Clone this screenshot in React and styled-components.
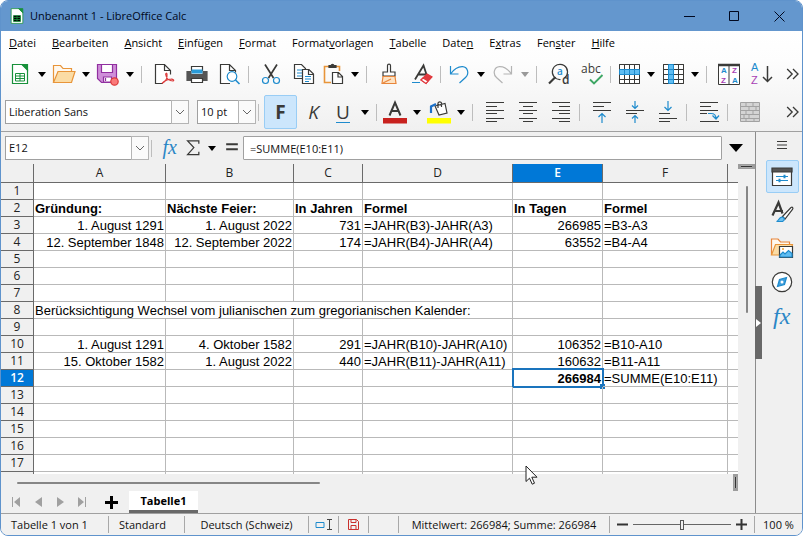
import React, { useState } from 'react';
import styled, { createGlobalStyle, css } from 'styled-components';

const dark = '#3a3a38';
const blue = '#1e8bcd';
const line = '#a0a0a0';

// Styles
const GlobalStyle = createGlobalStyle`
	* {
		box-sizing: border-box;
	}

	body {
		margin: 0;
		background: #fff;
		color: #111;
		font-family: 'Open Sans', 'Noto Sans', sans-serif;
		font-size: 11px;
		line-height: 16px;
	}

	button,
	input,
	select {
		margin: 0;
		padding: 0;
		border: 0;
		background: none;
		color: inherit;
		font: inherit;
	}

	svg {
		display: block;
		flex: none;
		overflow: visible;
	}
`;

const Window = styled.div`
	position: relative;
	display: flex;
	flex-direction: column;
	height: 100vh;
	min-height: 400px;
	overflow: hidden;
	border: 1px solid #5f93cc;
	border-radius: 8px;
	background: #f0f0f0;
`;

const TitleBar = styled.header`
	display: flex;
	align-items: center;
	flex: none;
	height: 30px;
	padding-left: 9px;
	background: #6497ce;
`;

const Title = styled.h1`
	flex: 1;
	margin: 0 0 0 6px;
	font-size: 11px;
	font-weight: normal;
	color: #000820;
`;

const WindowButton = styled.button`
	display: flex;
	align-items: center;
	justify-content: center;
	width: 45px;
	height: 30px;
`;

const Tools = styled.div`
	flex: none;
	border-bottom: 1px solid ${line};
	background: linear-gradient(#fff, #fdfdfd 30%, #f0f0f0);
`;

const MenuBar = styled.nav`
	display: flex;
	gap: 16px;
	height: 24px;
	padding: 4px 8px 0;

	a {
		color: #000;
		text-decoration: none;
	}
`;

const Toolbar = styled.div`
	display: flex;
	align-items: center;
	height: 38px;
	padding: 0 0 0 ${props => props.$indent}px;
`;

const Separator = styled.span`
	flex: none;
	width: 1px;
	height: 17px;
	margin: 0 5px 0 2px;
	background: #bdbdbd;
`;

const ToolButton = styled.button`
	display: flex;
	align-items: center;
	justify-content: center;
	flex: none;
	width: ${props => props.$width || 33}px;
	height: 34px;
	border-radius: 2px;

	${props =>
		props.$active &&
		css`
			border: 1px solid #99cdf5;
			background: #cce6fc;
		`}
`;

const OverflowButton = styled(ToolButton)`
	margin-left: auto;
`;

const Letter = styled.span`
	color: ${dark};
	font-size: 19px;
	line-height: 20px;
	font-weight: ${props => (props.$bold ? 700 : 400)};
	font-style: ${props => (props.$italic ? 'italic' : 'normal')};
	border-bottom: ${props => (props.$line ? `1px solid ${blue}` : '0')};
`;

const Combo = styled.div`
	position: relative;
	flex: none;
	width: ${props => props.$width}px;
	height: 24px;
	margin-right: ${props => props.$after}px;

	select {
		width: 100%;
		height: 100%;
		padding: 0 20px 0 3px;
		appearance: none;
		border: 1px solid ${line};
		background: #fff;
	}

	svg {
		position: absolute;
		top: 0;
		right: 0;
		pointer-events: none;
	}
`;

const Workspace = styled.div`
	display: flex;
	flex: 1;
	min-height: 0;
`;

const Main = styled.main`
	display: flex;
	flex: 1;
	flex-direction: column;
	min-width: 0;
`;

const FormulaBar = styled.div`
	display: flex;
	align-items: center;
	flex: none;
	height: 32px;
	padding: 0 5px 0 4px;
`;

const FormulaInput = styled.input`
	flex: 1;
	min-width: 0;
	height: 24px;
	padding: 0 6px;
	border: 1px solid ${line};
	border-radius: 1px;
	background: #fff;
`;

const GridArea = styled.div`
	display: flex;
	flex: 1;
	min-height: 0;
`;

const Sheet = styled.div`
	flex: 1;
	min-width: 0;
	overflow: hidden;
	background: #fff;
`;

const Table = styled.table`
	width: 100%;
	table-layout: fixed;
	border-collapse: separate;
	border-spacing: 0;
`;

const ColHead = styled.th`
	height: 19px;
	padding: 0;
	border-right: 1px solid #6a6a6a;
	border-bottom: 1px solid #6a6a6a;
	background: ${props => (props.$active ? '#0078d7' : '#f0f0f0')};
	color: ${props => (props.$active ? '#fff' : '#222')};
	font-size: 12px;
	font-weight: ${props => (props.$active ? 600 : 400)};
	line-height: 18px;

	&:last-child {
		border-right: 0;
	}
`;

const RowHead = styled(ColHead)`
	height: 17px;
	line-height: 16px;
`;

const Cell = styled.td`
	position: relative;
	height: 17px;
	padding: 2px 1px 0;
	border-right: 1px solid #b9b9b9;
	border-bottom: 1px solid #b9b9b9;
	color: #000;
	font-family: 'Liberation Sans', Arial, sans-serif;
	font-size: 13px;
	font-weight: ${props => (props.$bold ? 700 : 400)};
	line-height: 14px;
	text-align: ${props => (props.$right ? 'right' : 'left')};
	white-space: nowrap;

	&:last-child {
		border-right: 0;
	}
`;

const Selection = styled.span`
	position: absolute;
	inset: -2px -2px -2px -1px;
	border: 2px solid #1a74bd;

	&::after {
		content: '';
		position: absolute;
		right: -3px;
		bottom: -3px;
		width: 5px;
		height: 5px;
		background: #1a74bd;
	}
`;

const VerticalScroll = styled.div`
	display: flex;
	flex: none;
	flex-direction: column;
	align-items: center;
	width: 17px;
`;

const VerticalSplit = styled.span`
	width: 100%;
	height: 5px;
	margin-bottom: 17px;
	border: 1px solid #9c9c9c;
	border-width: 1px 3px;
	background: linear-gradient(#aaa 1px, #333 1px, #333 2px, #aaa 2px);
`;

const VerticalThumb = styled.span`
	width: 2px;
	height: 41%;
	border-radius: 1px;
	background: #868686;
`;

const HorizontalScroll = styled.div`
	display: flex;
	align-items: center;
	justify-content: space-between;
	flex: none;
	height: 17px;
	padding: 0 17px 0 16px;
`;

const HorizontalThumb = styled.span`
	width: 42%;
	height: 2px;
	border-radius: 1px;
	background: #868686;
`;

const HorizontalSplit = styled.span`
	width: 5px;
	height: 17px;
	border: 1px solid #9c9c9c;
	border-width: 3px 1px;
	background: linear-gradient(90deg, #aaa 1px, #333 1px, #333 2px, #aaa 2px);
`;

const TabBar = styled.div`
	display: flex;
	align-items: center;
	flex: none;
	height: 22px;
	padding-left: 4px;
`;

const NavButton = styled.button`
	display: flex;
	justify-content: center;
	width: 22px;
`;

const AddButton = styled(NavButton)`
	width: 36px;
`;

const SheetTab = styled.button`
	width: 69px;
	height: 22px;
	border-bottom: 3px solid #696969;
	background: #fff;
	color: #000;
	font-weight: 700;
`;

const Sidebar = styled.aside`
	position: relative;
	display: flex;
	flex: none;
	flex-direction: column;
	align-items: center;
	gap: 2px;
	width: 47px;
	padding-left: 6px;
	border-left: 1px solid #8c8c8c;
`;

const SideButton = styled(ToolButton)`
	height: 33px;
`;

const SideMenuButton = styled(ToolButton)`
	height: 26px;
`;

const Handle = styled.button`
	position: absolute;
	top: 154px;
	left: -1px;
	display: flex;
	align-items: center;
	width: 7px;
	height: 73px;
	background: #686868;
`;

const StatusBar = styled.footer`
	display: flex;
	align-items: center;
	flex: none;
	height: 22px;
	border-top: 1px solid ${line};
	background: #f1f1f1;
`;

const StatusCell = styled.div`
	display: flex;
	align-items: center;
	justify-content: ${props => props.$align || 'center'};
	flex: ${props => (props.$width ? `0 0 ${props.$width}px` : 1)};
	height: 17px;
	padding-left: ${props => (props.$align ? 10 : 0)}px;
	border-right: 1px solid #a8a8a8;
	white-space: nowrap;

	&:last-child {
		border-right: 0;
	}
`;

const ZoomSlider = styled.input`
	width: 98px;
	height: 16px;
	margin: 0 5px;
	appearance: none;
	background: linear-gradient(#666, #666) center / 100% 1px no-repeat;

	&::-webkit-slider-thumb {
		width: 4px;
		height: 10px;
		appearance: none;
		border: 1px solid #555;
		background: #f0f0f0;
	}
`;

const Pointer = styled.svg`
	position: absolute;
	left: 524px;
	top: 464px;
	pointer-events: none;
`;

// Icons
const Icon = ({ size = 24, children }) => (
	<svg
		width={size}
		height={size}
		viewBox="0 0 24 24"
		fill="none"
		stroke={dark}
		strokeWidth="1.2"
		aria-hidden="true"
	>
		{children}
	</svg>
);

const Lines = ({ rows }) => <path d={rows.map(([x, y, w]) => `M${x} ${y}h${w}`).join('')} />;

const icons = {
	calc: (
		<g stroke="#18913b">
			<path d="M4.5 2.5h10l5 5v14h-15z" fill="#fff" />
			<path d="M14 2.5h5.500v5.500z" fill="#18913b" />
			<path d="M7.500 11.500h9v7.500h-9zM7.500 14h9M7.500 16.500h9M12 11.500v7.500" strokeWidth="1" />
		</g>
	),
	open: (
		<g stroke="#e8953a">
			<path d="M1.500 20.500v-17h7l2.500 3h8.500v3" fill="#fff8ee" />
			<path d="M1.500 20.500l4.500-11h17l-3.500 11z" fill="#fbdca5" />
		</g>
	),
	save: (
		<g>
			<path d="M1.500 2.500h19v18h-15l-4-4z" fill="#cf8fd9" stroke="#9130a0" />
			<path d="M5.500 2.500h11v8h-11z" fill="#fff" stroke="#9130a0" />
			<path d="M7.500 20v-5h8v5z" fill="#fff" stroke="#9130a0" />
			<path d="M9.500 16v3" stroke="#9130a0" />
			<circle cx="18.500" cy="19.500" r="3.700" fill="#fa7a7a" stroke="#dc3b3b" />
		</g>
	),
	pdf: (
		<g>
			<path d="M11 21.500H3.500v-19h9l6 6v4M12.500 2.500v6h6" fill="#fff" />
			<path
				d="M10 21.500c3.500-1.500 5.500-5.500 5-9.500-.2-1.200-1.500-1-1.300.5.500 3.500 3.300 6.500 7.300 6.500 1.500-.3.500-2-2-1.800-3.500.2-6.500 1.300-9 4.300z"
				stroke="#dc3b3b"
			/>
		</g>
	),
	print: (
		<g>
			<path d="M6.500 9V4.500h11V9" fill="#fff" />
			<path d="M2 9.500h4v3h12v-3h4v9H2z" fill="#555" stroke="#555" />
			<path d="M6.500 7.500h11v4h-11z" fill="#2a9bd8" stroke="none" />
			<path d="M6.500 16.500h11v4h-11z" fill="#fff" />
		</g>
	),
	preview: (
		<g>
			<path d="M12 21.500H2.500v-19h9l6 6v2M11.500 2.500v6h6" fill="#fff" />
			<circle cx="14" cy="14.500" r="4.800" stroke={blue} fill="#fff" />
			<path d="M17.500 18l4 4" stroke={blue} strokeWidth="1.600" />
		</g>
	),
	cut: (
		<g>
			<path d="M6 2.500l8.500 13.500M18 2.500L9.500 16" strokeWidth="1.700" />
			<circle cx="6.500" cy="18.500" r="3" stroke={blue} />
			<circle cx="17.500" cy="18.500" r="3" stroke={blue} />
		</g>
	),
	copy: (
		<g>
			<path d="M2.500 2.500h7l4 4v10h-11z" fill="#fff" />
			<path d="M5 8h5M5 11h5M5 14h5" stroke={blue} />
			<path d="M10.500 7.500h6.500l4.500 4.500v9.500h-11zM16.500 7.500v5h5" fill="#fff" />
			<path d="M13 14.500h6M13 17h6M13 19.500h4" stroke={blue} />
		</g>
	),
	paste: (
		<g>
			<path d="M8 4.500H3.500v16H10M15 4.500h3.500V9" stroke="#e8953a" strokeWidth="1.600" />
			<path d="M8 5.500V3.500h2c.5-1.500 2.500-1.500 3 0h2v2z" fill={dark} />
			<path d="M11.500 10.500h6l4 4v7h-10zM17 10.500v4.500h4.500" fill="#fff" />
		</g>
	),
	brush: (
		<g>
			<path d="M10.500 10V3.500c0-1.800 3-1.800 3 0V10h4.500v4H6v-4z" fill="#fff" />
			<path d="M6 14.500h12l1 7H5z" fill="#fde3c4" stroke="#e8853a" />
			<path d="M6 21l8-4" stroke="#e8853a" />
		</g>
	),
	clear: (
		<g>
			<path d="M5 17.500L13.500 3.500l3 9M8 12.500h8" strokeWidth="1.800" />
			<path d="M2 20.500h8" stroke={blue} />
			<path d="M11 18l6-6 5 3-6 6.500z" fill="#e0393e" stroke="#e0393e" />
			<path d="M11 18l2-2 5 3-2 2.500z" fill="#fff" stroke="#e0393e" />
		</g>
	),
	undo: <path d="M3.500 4v8h8M3.500 12c4-5.500 7.500-7.500 12-7.300 5.500.5 7 7 3 10.800l-6 5.500" stroke={blue} />,
	redo: <path d="M20.500 4v8h-8M20.500 12c-4-5.500-7.500-7.500-12-7.300-5.500.5-7 7-3 10.800l6 5.500" stroke="#b4b4b4" />,
	find: (
		<g>
			<path d="M17.500 16a7.600 7.600 0 1 0-4 1.500" />
			<path d="M8.500 15L2 21.500" strokeWidth="2.200" />
			<text x="10" y="13" fontSize="10" fontWeight="600" fill={blue} stroke="none">a</text>
			<text x="15" y="22" fontSize="12" fontWeight="600" fill={dark} stroke="none">d</text>
		</g>
	),
	spell: (
		<g>
			<text x="1" y="11" fontSize="12" fill={dark} stroke="none">abc</text>
			<path d="M10 17.500l4 4L22.500 13" stroke="#3fa765" strokeWidth="1.900" />
		</g>
	),
	rowGrid: (
		<g strokeWidth="1">
			<path d="M2.500 2.500h20v19h-20z" fill="#fff" />
			<path d="M2.500 7.500h20v5h-20z" fill="#5fbdf2" stroke="none" />
			<path d="M2.500 2.500h20v19h-20zM2.500 17.500h20M7.500 2.500v5M12.500 2.500v5M17.500 2.500v5M7.500 12.500v9M12.500 12.500v9M17.500 12.500v9" />
			<path d="M2.500 7.500h20v5h-20zM7.500 7.500v5M12.500 7.500v5M17.500 7.500v5" stroke={blue} />
		</g>
	),
	colGrid: (
		<g strokeWidth="1">
			<path d="M2.500 2.500h20v19h-20z" fill="#fff" />
			<path d="M7.500 2.500h5v19h-5z" fill="#5fbdf2" stroke="none" />
			<path d="M2.500 2.500h20v19h-20zM17.500 2.500v19M2.500 7.500h5M2.500 12.500h5M2.500 17.500h5M12.500 7.500h10M12.500 12.500h10M12.500 17.500h10" />
			<path d="M7.500 2.500h5v19h-5zM7.500 7.500h5M7.500 12.500h5M7.500 17.500h5" stroke={blue} />
		</g>
	),
	sort: (
		<g>
			<path d="M1.500 3h21v19.500h-21zM12 4v18" fill="#fff" strokeWidth="1" />
			<path d="M1 3h22" strokeWidth="2.500" />
			<g fontFamily="Liberation Sans, sans-serif" fontSize="8" fontWeight="700" stroke="none">
				<text x="4" y="11" fill={blue}>A</text>
				<text x="15" y="11" fill="#a83fb5">Z</text>
				<text x="4" y="21" fill="#a83fb5">Z</text>
				<text x="15" y="21" fill={blue}>A</text>
			</g>
		</g>
	),
	sortAz: (
		<g>
			<g fontFamily="Liberation Sans, sans-serif" fontSize="11" stroke="none">
				<text x="1" y="9" fill={blue}>A</text>
				<text x="1" y="22" fill="#a83fb5">Z</text>
			</g>
			<path d="M17.500 4v15.500M13 15l4.500 4.500L22 15" strokeWidth="1.500" />
		</g>
	),
	left: <Lines rows={[[3, 2.5, 18], [3, 6.5, 11], [3, 10.5, 18], [3, 13.5, 11], [3, 18.5, 18], [3, 21.5, 11]]} />,
	center: <Lines rows={[[3, 2.5, 18], [7, 6.5, 10], [3, 10.5, 18], [7, 13.5, 10], [3, 18.5, 18], [7, 21.5, 10]]} />,
	right: <Lines rows={[[3, 2.5, 18], [10, 6.5, 11], [3, 10.5, 18], [10, 13.5, 11], [3, 18.5, 18], [10, 21.5, 11]]} />,
	top: (
		<g>
			<Lines rows={[[3, 2.5, 18], [3, 6.5, 11], [3, 10.5, 18]]} />
			<path d="M12 23v-9M8.500 17l3.500-3.500 3.500 3.500" stroke={blue} />
		</g>
	),
	middle: (
		<g>
			<Lines rows={[[3, 10.5, 18], [3, 13.5, 11]]} />
			<path d="M12 1v7M9 5.500l3 3 3-3M12 23v-7M9 18.500l3-3 3 3" stroke={blue} />
		</g>
	),
	bottom: (
		<g>
			<Lines rows={[[3, 13.5, 11], [3, 18.5, 18], [3, 21.5, 11]]} />
			<path d="M12 1v9M8.500 7l3.500 3.500L15.500 7" stroke={blue} />
		</g>
	),
	wrap: (
		<g>
			<Lines rows={[[3, 2.5, 18], [3, 6.5, 11], [3, 10.5, 18], [3, 21.5, 19]]} />
			<path d="M3 13.500h7" />
			<path d="M11 13.500h3c3.500 0 5 2 5 5M15.500 15.500l3.500 3.500 3-3.500" stroke={blue} />
		</g>
	),
	merge: (
		<g stroke="#a2a2a2" strokeWidth="1">
			<path d="M2.500 2.500h19v19h-19z" fill="#d4d4d4" />
			<path d="M2.500 6.500h19M2.500 10.500h19M2.500 14.500h19M2.500 18.500h19M8 2.500v4M15 2.500v4M11 6.500v4M18 6.500v4M8 10.500v4M15 10.500v4M11 14.500v4M6 14.500v4M8 18.500v3M16 18.500v3" />
		</g>
	),
	fontColor: (
		<g>
			<path d="M6.500 15.500L12 2.500l5.500 13M8.500 11h7" strokeWidth="2" />
			<path d="M0 18h24v5.500H0z" fill="#c8211e" stroke="none" />
		</g>
	),
	fill: (
		<g>
			<path d="M8 6l10-2.500 2 9.500-8 2zM11 8V3c.5-1.500 3-1.500 3.500 0v4" fill="#fff" />
			<path d="M4 13V6.500L9 4" stroke="#1c70c8" strokeWidth="2.200" />
			<path d="M0 18h24v5.500H0z" fill="#ff0" stroke="none" />
		</g>
	),
	properties: (
		<g>
			<path d="M2.500 3.500h19v17h-19z" fill="#fff" />
			<path d="M2 3h20v4H2z" fill="#555" />
			<path d="M6 11.500h12M6 15.500h12" stroke={blue} />
			<path d="M14.500 9.800v3.400M9.500 13.800v3.400" stroke={blue} strokeWidth="2" />
		</g>
	),
	styles: (
		<g>
			<path d="M2.500 15.500L8.500 2.500l4 11M5 11h8" strokeWidth="2.200" />
			<path d="M12.500 16.500L21 7.500c1.500-1 2.500.5 1.500 1.800L15 19z" fill="#fff" />
			<path d="M6.500 21.500c2.500-.5 2-4 5.500-4.500 3 .3 3 3.500.5 4.500z" fill="#6cc0f0" stroke={blue} />
		</g>
	),
	gallery: (
		<g>
			<path d="M1.500 20V4h6.500l2.500 3h9v3" fill="#fff8ee" stroke="#e8853a" />
			<path d="M1.500 20L5.500 9.500h17L20 20z" fill="#fbdca5" stroke="#e8953a" />
			<path d="M9.500 11.500h13v11h-13z" fill="#fff" />
			<path d="M10 20l3-3 2 2 3.500-3.500 3.500 3V22H10z" fill="#5fbdf2" stroke={blue} />
			<circle cx="13" cy="14" r="1" fill="#f0a030" stroke="none" />
		</g>
	),
	navigator: (
		<g>
			<circle cx="12" cy="12" r="9.700" fill="#fff" />
			<path d="M16.500 7.500l-2 7-7 2 2-7z" fill="#3f9edb" stroke={blue} />
			<circle cx="12" cy="12" r="1.500" fill="#fff" stroke="none" />
		</g>
	),
	functions: (
		<text x="3" y="19" fontFamily="Liberation Serif, serif" fontStyle="italic" fontSize="24" fill="#2b86c6" stroke="none">
			fx
		</text>
	),
	more: <path d="M5 6l6 6-6 6M12 6l6 6-6 6" strokeWidth="1.600" />
};

const Caret = ({ muted }) => (
	<svg width="8" height="5" viewBox="0 0 8 5" aria-hidden="true">
		<path d="M0 0h8L4 5z" fill={muted ? '#999' : '#000'} />
	</svg>
);

const Chevron = () => (
	<svg width="18" height="24" viewBox="0 0 18 24" fill="none" aria-hidden="true">
		<path d="M.5.5h17v23H.5z" fill="#fafafa" stroke="#b4b4b4" />
		<path d="M5 10l4 4 4-4" stroke="#666" />
	</svg>
);

const Tool = ({ name, label }) => (
	<ToolButton aria-label={label}>
		<Icon>{icons[name]}</Icon>
	</ToolButton>
);

const DropTool = ({ name, label, muted, children }) => (
	<React.Fragment>
		<ToolButton $width={26} aria-label={label} disabled={muted}>
			{children || <Icon>{icons[name]}</Icon>}
		</ToolButton>
		<ToolButton $width={18} aria-label={`${label}: Optionen`} disabled={muted}>
			<Caret muted={muted} />
		</ToolButton>
	</React.Fragment>
);

const Select = ({ label, value, width, after = 0 }) => (
	<Combo $width={width} $after={after}>
		<select aria-label={label} defaultValue={value}>
			<option>{value}</option>
		</select>
		<Chevron />
	</Combo>
);

// Menu entries, with the index of the underlined letter
const menus = [
	['Datei', 0],
	['Bearbeiten', 0],
	['Ansicht', 0],
	['Einfügen', 0],
	['Format', 0],
	['Formatvorlagen', 6],
	['Tabelle', 0],
	['Daten', 4],
	['Extras', 1],
	['Fenster', 3],
	['Hilfe', 0]
];

const columns = [
	{ name: 'A', width: 132 },
	{ name: 'B', width: 128 },
	{ name: 'C', width: 69 },
	{ name: 'D', width: 150 },
	{ name: 'E', width: 90 },
	{ name: 'F', width: 125 },
	{ name: '' }
];

const cells = {
	2: ['Gründung:', 'Nächste Feier:', 'In Jahren', 'Formel', 'In Tagen', 'Formel'],
	3: ['1. August 1291', '1. August 2022', '731', '=JAHR(B3)-JAHR(A3)', '266985', '=B3-A3'],
	4: ['12. September 1848', '12. September 2022', '174', '=JAHR(B4)-JAHR(A4)', '63552', '=B4-A4'],
	8: ['Berücksichtigung Wechsel vom julianischen zum gregorianischen Kalender:'],
	10: ['1. August 1291', '4. Oktober 1582', '291', '=JAHR(B10)-JAHR(A10)', '106352', '=B10-A10'],
	11: ['15. Oktober 1582', '1. August 2022', '440', '=JAHR(B11)-JAHR(A11)', '160632', '=B11-A11'],
	12: ['', '', '', '', '266984', '=SUMME(E10:E11)']
};

const selected = { row: 12, column: 'E' };

function SheetRow({ row }) {
	const values = cells[row] || [];
	// a single long text runs over the empty cells beside it
	const wide = values.length === 1;

	return (
		<tr>
			<RowHead scope="row" $active={row === selected.row}>
				{row < 18 ? row : ''}
			</RowHead>
			{wide && <Cell colSpan={4}>{values[0]}</Cell>}
			{columns.slice(wide ? 4 : 0).map(({ name }, index) => {
				const value = wide ? '' : values[index];
				const active = row === selected.row && name === selected.column;
				return (
					<Cell
						key={name || 'rest'}
						$bold={row === 2 || active}
						$right={row !== 2 && 'ABCE'.includes(name)}
					>
						{value}
						{active && <Selection />}
					</Cell>
				);
			})}
		</tr>
	);
}

export default function App() {
	const [formula, setFormula] = useState('=SUMME(E10:E11)');
	const [zoom, setZoom] = useState(50);

	return (
		<React.Fragment>
			<GlobalStyle />
			<Window>
				<TitleBar>
					<svg width="14" height="18" viewBox="3 1 18 22" aria-hidden="true">
						{icons.calc}
					</svg>
					<Title>Unbenannt 1 - LibreOffice Calc</Title>
					<WindowButton aria-label="Minimieren">
						<svg width="11" height="11" stroke="#000820">
							<path d="M0 5.500h11" />
						</svg>
					</WindowButton>
					<WindowButton aria-label="Maximieren">
						<svg width="11" height="11" stroke="#000820" fill="none">
							<path d="M.5.5h9v9h-9z" />
						</svg>
					</WindowButton>
					<WindowButton aria-label="Schliessen">
						<svg width="11" height="11" stroke="#000820">
							<path d="M.5.5l10 10M10.500.5l-10 10" />
						</svg>
					</WindowButton>
				</TitleBar>

				<Tools>
					<MenuBar>
						{menus.map(([text, key]) => (
							<a href="#" key={text}>
								{text.slice(0, key)}
								<u>{text[key]}</u>
								{text.slice(key + 1)}
							</a>
						))}
					</MenuBar>
					<Toolbar $indent={6}>
						<DropTool name="calc" label="Neu" />
						<DropTool name="open" label="Öffnen" />
						<DropTool name="save" label="Speichern" />
						<Separator />
						<Tool name="pdf" label="Als PDF exportieren" />
						<Tool name="print" label="Drucken" />
						<Tool name="preview" label="Druckvorschau" />
						<Separator />
						<Tool name="cut" label="Ausschneiden" />
						<Tool name="copy" label="Kopieren" />
						<DropTool name="paste" label="Einfügen" />
						<Separator />
						<Tool name="brush" label="Format übertragen" />
						<Tool name="clear" label="Direkte Formatierung löschen" />
						<Separator />
						<DropTool name="undo" label="Rückgängig" />
						<DropTool name="redo" label="Wiederherstellen" muted />
						<Separator />
						<Tool name="find" label="Suchen und ersetzen" />
						<Tool name="spell" label="Rechtschreibung" />
						<Separator />
						<DropTool name="rowGrid" label="Zeile" />
						<DropTool name="colGrid" label="Spalte" />
						<Separator />
						<Tool name="sort" label="Sortieren" />
						<Tool name="sortAz" label="Aufsteigend sortieren" />
						<OverflowButton $width={18} aria-label="Mehr">
							<Icon size={20}>{icons.more}</Icon>
						</OverflowButton>
					</Toolbar>
					<Toolbar $indent={4}>
						<Select label="Schriftname" value="Liberation Sans" width={184} after={8} />
						<Select label="Schriftgrösse" value="10 pt" width={59} />
						<Separator />
						<ToolButton $active aria-label="Fett" aria-pressed="true">
							<Letter $bold>F</Letter>
						</ToolButton>
						<ToolButton aria-label="Kursiv">
							<Letter $italic>K</Letter>
						</ToolButton>
						<DropTool label="Unterstrichen">
							<Letter $line>U</Letter>
						</DropTool>
						<Separator />
						<DropTool name="fontColor" label="Schriftfarbe" />
						<DropTool name="fill" label="Hintergrundfarbe" />
						<Separator />
						<Tool name="left" label="Linksbündig" />
						<Tool name="center" label="Zentriert" />
						<Tool name="right" label="Rechtsbündig" />
						<Separator />
						<Tool name="top" label="Oben" />
						<Tool name="middle" label="Vertikal zentriert" />
						<Tool name="bottom" label="Unten" />
						<Separator />
						<Tool name="wrap" label="Textumbruch" />
						<Separator />
						<Tool name="merge" label="Zellen verbinden" />
						<OverflowButton $width={18} aria-label="Mehr">
							<Icon size={20}>{icons.more}</Icon>
						</OverflowButton>
					</Toolbar>
				</Tools>

				<Workspace>
					<Main>
						<FormulaBar>
							<Select label="Namenfeld" value="E12" width={144} />
							<Separator />
							<ToolButton $width={26} aria-label="Funktionsassistent">
								<Icon size={20}>{icons.functions}</Icon>
							</ToolButton>
							<ToolButton $width={20} aria-label="Summe">
								<Icon size={20}>
									<path d="M19 7V3.500H5.500L13 11.500 5.500 20H19v-3.500" strokeWidth="1.500" />
								</Icon>
							</ToolButton>
							<ToolButton $width={18} aria-label="Summe: Optionen">
								<Caret />
							</ToolButton>
							<ToolButton $width={22} aria-label="Formel">
								<Icon size={20}>
									<path d="M5 7.500h14M5 13.500h14" strokeWidth="2.400" />
								</Icon>
							</ToolButton>
							<FormulaInput
								aria-label="Eingabezeile"
								value={formula}
								onChange={event => setFormula(event.target.value)}
							/>
							<ToolButton $width={28} aria-label="Eingabezeile erweitern">
								<svg width="14" height="8">
									<path d="M0 0h14L7 8z" />
								</svg>
							</ToolButton>
						</FormulaBar>

						<GridArea>
							<Sheet>
								<Table>
									<colgroup>
										<col width={33} />
										{columns.map(({ name, width }) => (
											<col key={name || 'rest'} width={width} />
										))}
									</colgroup>
									<thead>
										<tr>
											<ColHead />
											{columns.map(({ name }) => (
												<ColHead key={name || 'rest'} scope="col" $active={name === selected.column}>
													{name}
												</ColHead>
											))}
										</tr>
									</thead>
									<tbody>
										{Array.from({ length: 18 }, (_, index) => (
											<SheetRow key={index} row={index + 1} />
										))}
									</tbody>
								</Table>
							</Sheet>
							<VerticalScroll>
								<VerticalSplit />
								<VerticalThumb />
							</VerticalScroll>
						</GridArea>
						<HorizontalScroll>
							<HorizontalThumb />
							<HorizontalSplit />
						</HorizontalScroll>
						<TabBar>
							<NavButton aria-label="Erste Tabelle">
								<svg width="8" height="10" fill="#a0a0a0">
									<path d="M0 0h1v10H0zM8 0v10L2 5z" />
								</svg>
							</NavButton>
							<NavButton aria-label="Vorherige Tabelle">
								<svg width="7" height="10" fill="#a0a0a0">
									<path d="M7 0v10L0 5z" />
								</svg>
							</NavButton>
							<NavButton aria-label="Nächste Tabelle">
								<svg width="7" height="10" fill="#a0a0a0">
									<path d="M0 0v10l7-5z" />
								</svg>
							</NavButton>
							<NavButton aria-label="Letzte Tabelle">
								<svg width="8" height="10" fill="#a0a0a0">
									<path d="M7 0h1v10H7zM0 0v10l6-5z" />
								</svg>
							</NavButton>
							<AddButton aria-label="Tabelle hinzufügen">
								<svg width="13" height="13" stroke="#000" strokeWidth="3">
									<path d="M0 6.500h13M6.500 0v13" />
								</svg>
							</AddButton>
							<SheetTab>Tabelle1</SheetTab>
						</TabBar>
					</Main>

					<Sidebar>
						<SideMenuButton $width={32} aria-label="Seitenleisteneinstellungen">
							<svg width="10" height="8" stroke={dark}>
								<path d="M0 .5h10M0 4h10M0 7.500h10" />
							</svg>
						</SideMenuButton>
						<SideButton $active aria-label="Eigenschaften">
							<Icon>{icons.properties}</Icon>
						</SideButton>
						<SideButton aria-label="Formatvorlagen">
							<Icon>{icons.styles}</Icon>
						</SideButton>
						<SideButton aria-label="Galerie">
							<Icon>{icons.gallery}</Icon>
						</SideButton>
						<SideButton aria-label="Navigator">
							<Icon>{icons.navigator}</Icon>
						</SideButton>
						<SideButton aria-label="Funktionen">
							<Icon>{icons.functions}</Icon>
						</SideButton>
						<Handle aria-label="Seitenleiste ausblenden">
							<svg width="6" height="8">
								<path d="M1 0v8l5-4z" fill="#fff" />
							</svg>
						</Handle>
					</Sidebar>
				</Workspace>

				<StatusBar>
					<StatusCell $width={108} $align="flex-start">Tabelle 1 von 1</StatusCell>
					<StatusCell $width={76} $align="flex-start">Standard</StatusCell>
					<StatusCell $width={124}>Deutsch (Schweiz)</StatusCell>
					<StatusCell $width={30}>
						<svg width="18" height="12" fill="none">
							<path d="M1 3.500h8v5H1z" stroke={blue} />
							<path d="M12 .5h5M12 10.500h5M14.500.5v10" stroke="#444" />
						</svg>
					</StatusCell>
					<StatusCell $width={30}>
						<svg width="11" height="11" fill="none" stroke="#c9302c">
							<path d="M.5.5h8l2 2v8H.5zM3 .5v3h5v-3M3 10.500v-4h5v4" />
						</svg>
					</StatusCell>
					<StatusCell $width={30} />
					<StatusCell>Mittelwert: 266984; Summe: 266984</StatusCell>
					<StatusCell $width={145}>
						<button aria-label="Verkleinern">
							<svg width="11" height="11" stroke="#333" strokeWidth="2">
								<path d="M0 5.500h11" />
							</svg>
						</button>
						<ZoomSlider
							type="range"
							aria-label="Massstab"
							value={zoom}
							onChange={event => setZoom(event.target.value)}
						/>
						<button aria-label="Vergrössern">
							<svg width="11" height="11" stroke="#333" strokeWidth="2">
								<path d="M0 5.500h11M5.500 0v11" />
							</svg>
						</button>
					</StatusCell>
					<StatusCell $width={47}>100 %</StatusCell>
				</StatusBar>

				<Pointer width="13" height="21" viewBox="0 0 13 21" aria-hidden="true">
					<path d="M1 1v15.500l3.500-3.300 2.700 6 2.300-1-2.700-6H12z" fill="#fff" stroke="#222" />
				</Pointer>
			</Window>
		</React.Fragment>
	);
}
